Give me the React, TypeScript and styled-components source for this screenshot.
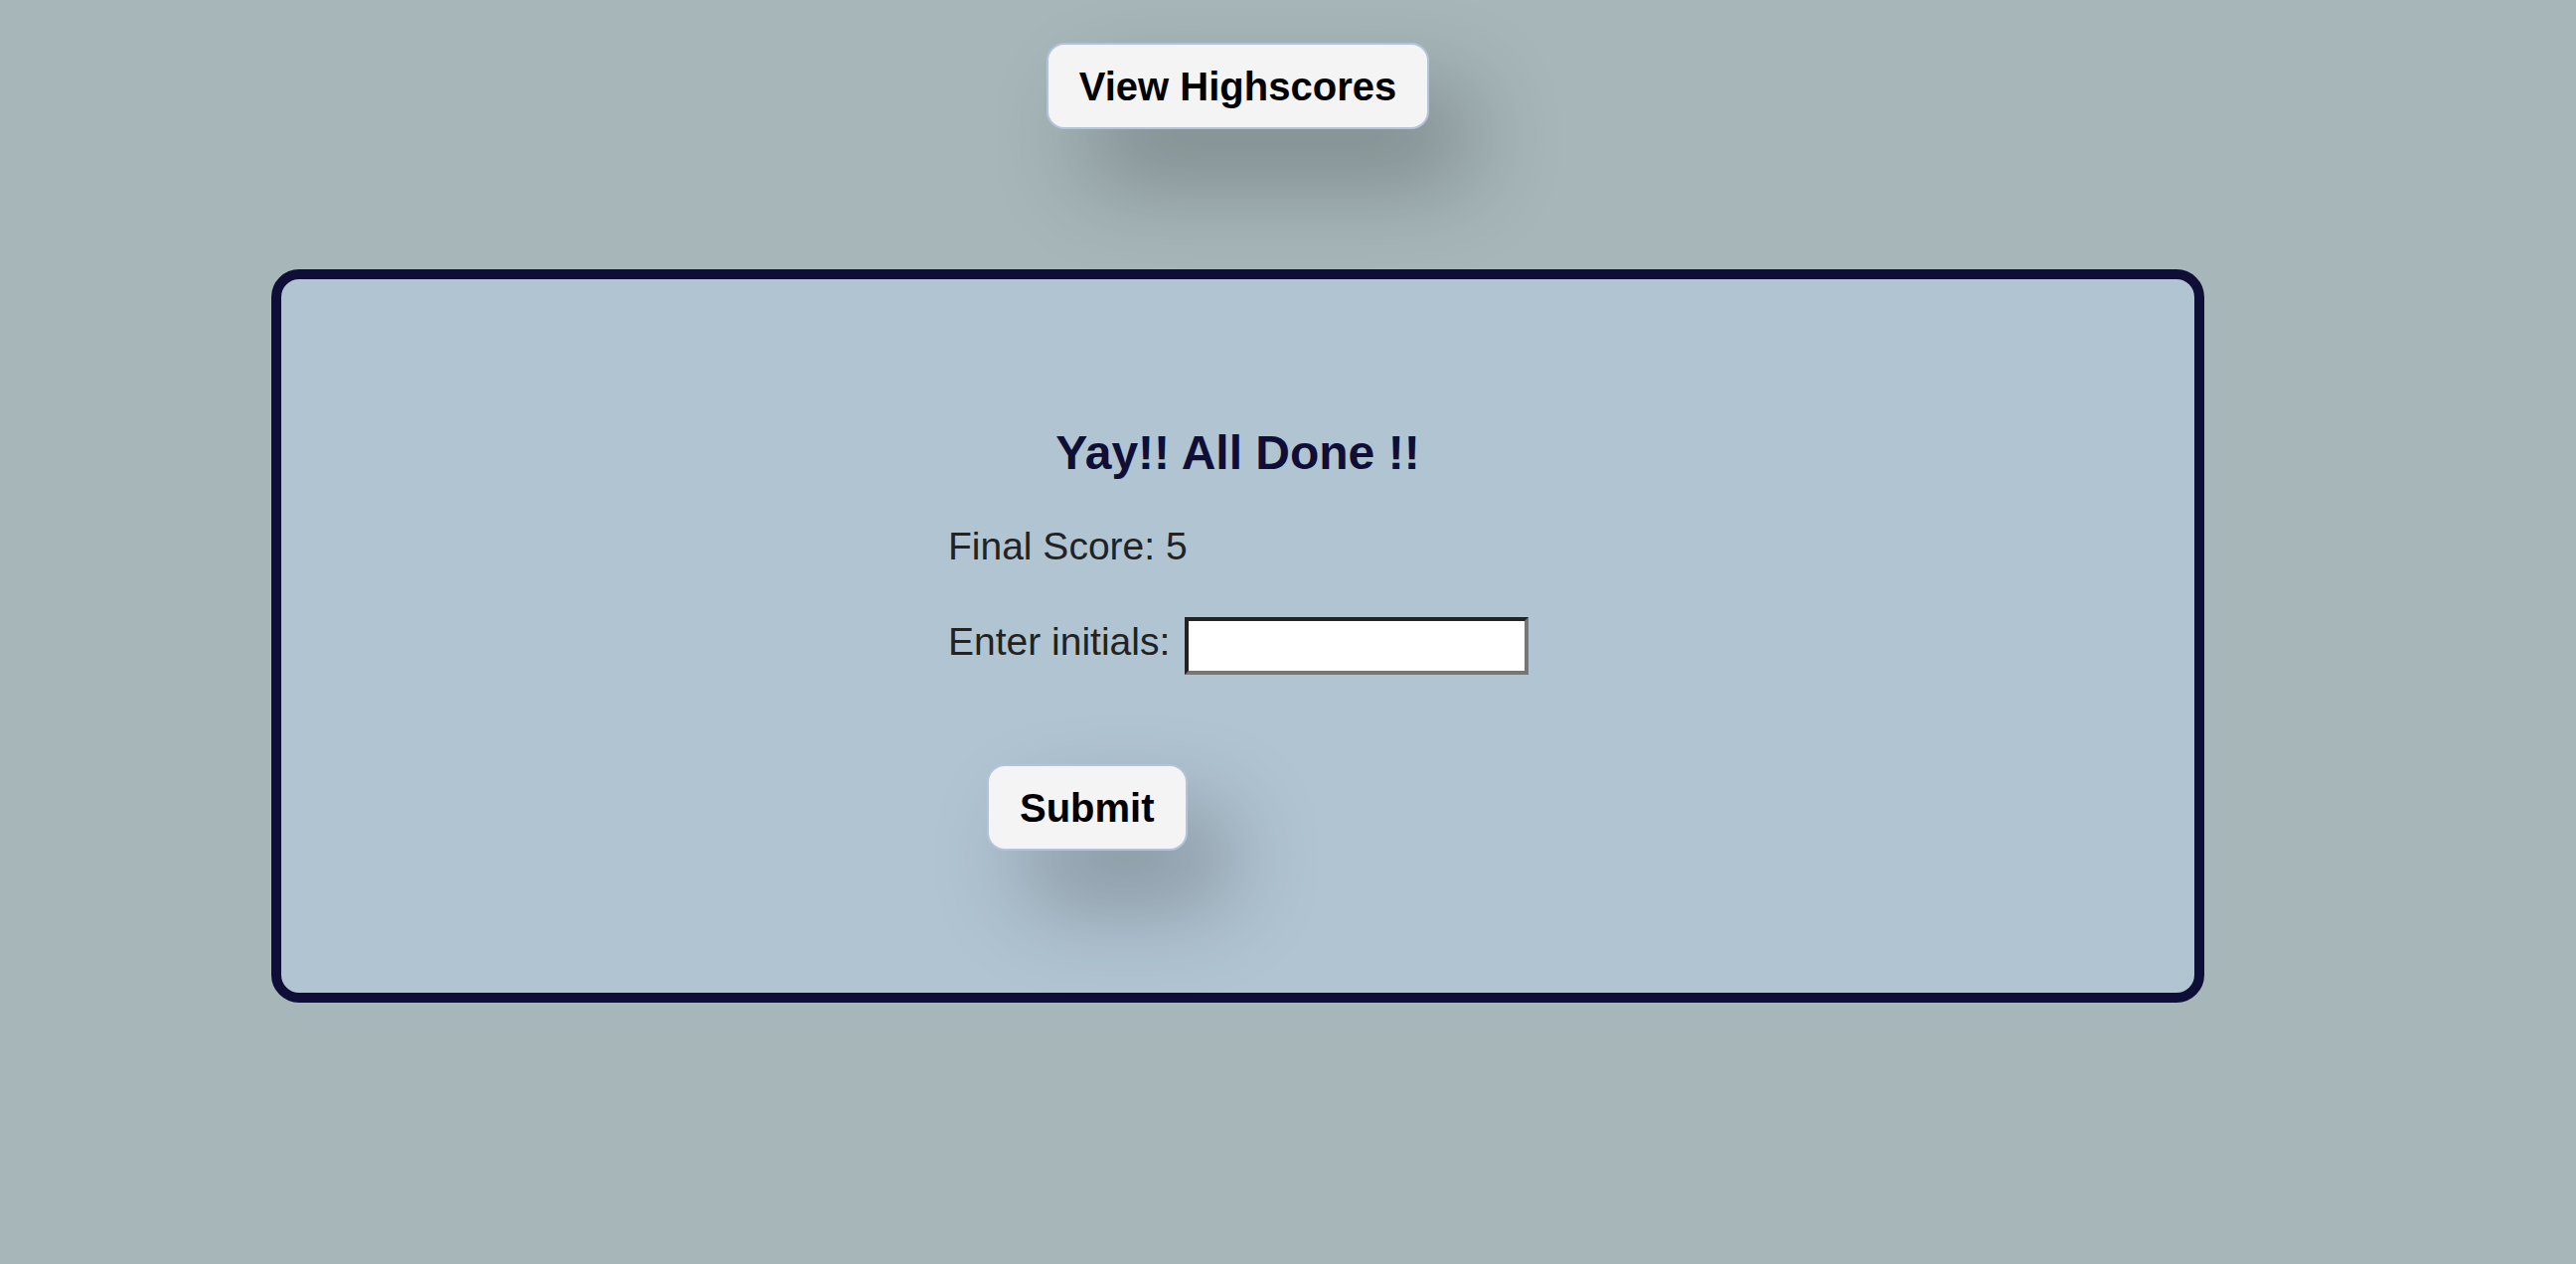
import React from "react";
import styled, { createGlobalStyle } from "styled-components";

const GlobalStyle = createGlobalStyle`
  html, body {
    margin: 0;
    padding: 0;
    background: #a6b6b9;
    font-family: "Liberation Sans", Arial, Helvetica, sans-serif;
  }
  * { box-sizing: border-box; }
`;

const Page = styled.div`
  min-height: 1272px;
  background: #a6b6b9;
  padding: 43px 0 0 273px;
  display: flex;
  align-items: flex-start;
`;

const Column = styled.div`
  width: 1945px;
  display: flex;
  flex-direction: column;
  align-items: center;
`;

const PillButton = styled.button<{ $mt?: number }>`
  font-family: "Liberation Sans", Arial, Helvetica, sans-serif;
  font-weight: 700;
  font-size: 40px;
  line-height: 46px;
  height: 87px;
  color: #000;
  background: #f4f4f4;
  border: 2px solid #b3c4da;
  border-radius: 18px;
  padding: 0 31px;
  margin-top: ${(p) => p.$mt ?? 0}px;
  box-shadow: 40px 50px 95px rgba(0, 0, 0, 0.27);
  cursor: pointer;
  align-self: ${(p) => (p.$mt ? "flex-start" : "center")};
  margin-left: ${(p) => (p.$mt ? "39px" : "0")};
`;

const Card = styled.section`
  width: 100%;
  margin-top: 141px;
  background: #b1c4d2;
  border: 10px solid #0e0e36;
  border-radius: 28px;
  padding: 147px 0 143px;
  display: flex;
  flex-direction: column;
  align-items: center;
`;

const Content = styled.div`
  width: 583px;
  display: flex;
  flex-direction: column;
`;

const Title = styled.h2`
  margin: 0;
  font-size: 48px;
  line-height: 55px;
  font-weight: 700;
  color: #0e0e36;
  text-align: center;
`;

const Line = styled.p<{ $mt: number }>`
  margin: ${(p) => p.$mt}px 0 0;
  font-size: 39px;
  line-height: 45px;
  color: #222;
`;

const Row = styled.label`
  margin-top: 49px;
  display: flex;
  align-items: baseline;
  font-size: 39px;
  line-height: 45px;
  color: #222;
`;

const LabelText = styled.span`
  white-space: nowrap;
  flex-shrink: 0;
`;

const Initials = styled.input`
  flex-shrink: 0;
  margin-left: 15px;
  width: 346px;
  height: 58px;
  padding: 1px 4px;
  font-family: "Liberation Sans", Arial, sans-serif;
  font-size: 26.7px;
  background: #fff;
  border-style: solid;
  border-width: 4px;
  border-color: #222 #767676 #767676 #222;
  outline: none;
`;

export default function App() {
  return (
    <>
      <GlobalStyle />
      <Page>
        <Column>
          <PillButton type="button">View Highscores</PillButton>
          <Card>
            <Content>
              <Title>Yay!! All Done !!</Title>
              <Line $mt={44}>Final Score: 5</Line>
              <Row>
                <LabelText>Enter initials:</LabelText>
                <Initials type="text" />
              </Row>
              <PillButton type="button" $mt={90}>
                Submit
              </PillButton>
            </Content>
          </Card>
        </Column>
      </Page>
    </>
  );
}
